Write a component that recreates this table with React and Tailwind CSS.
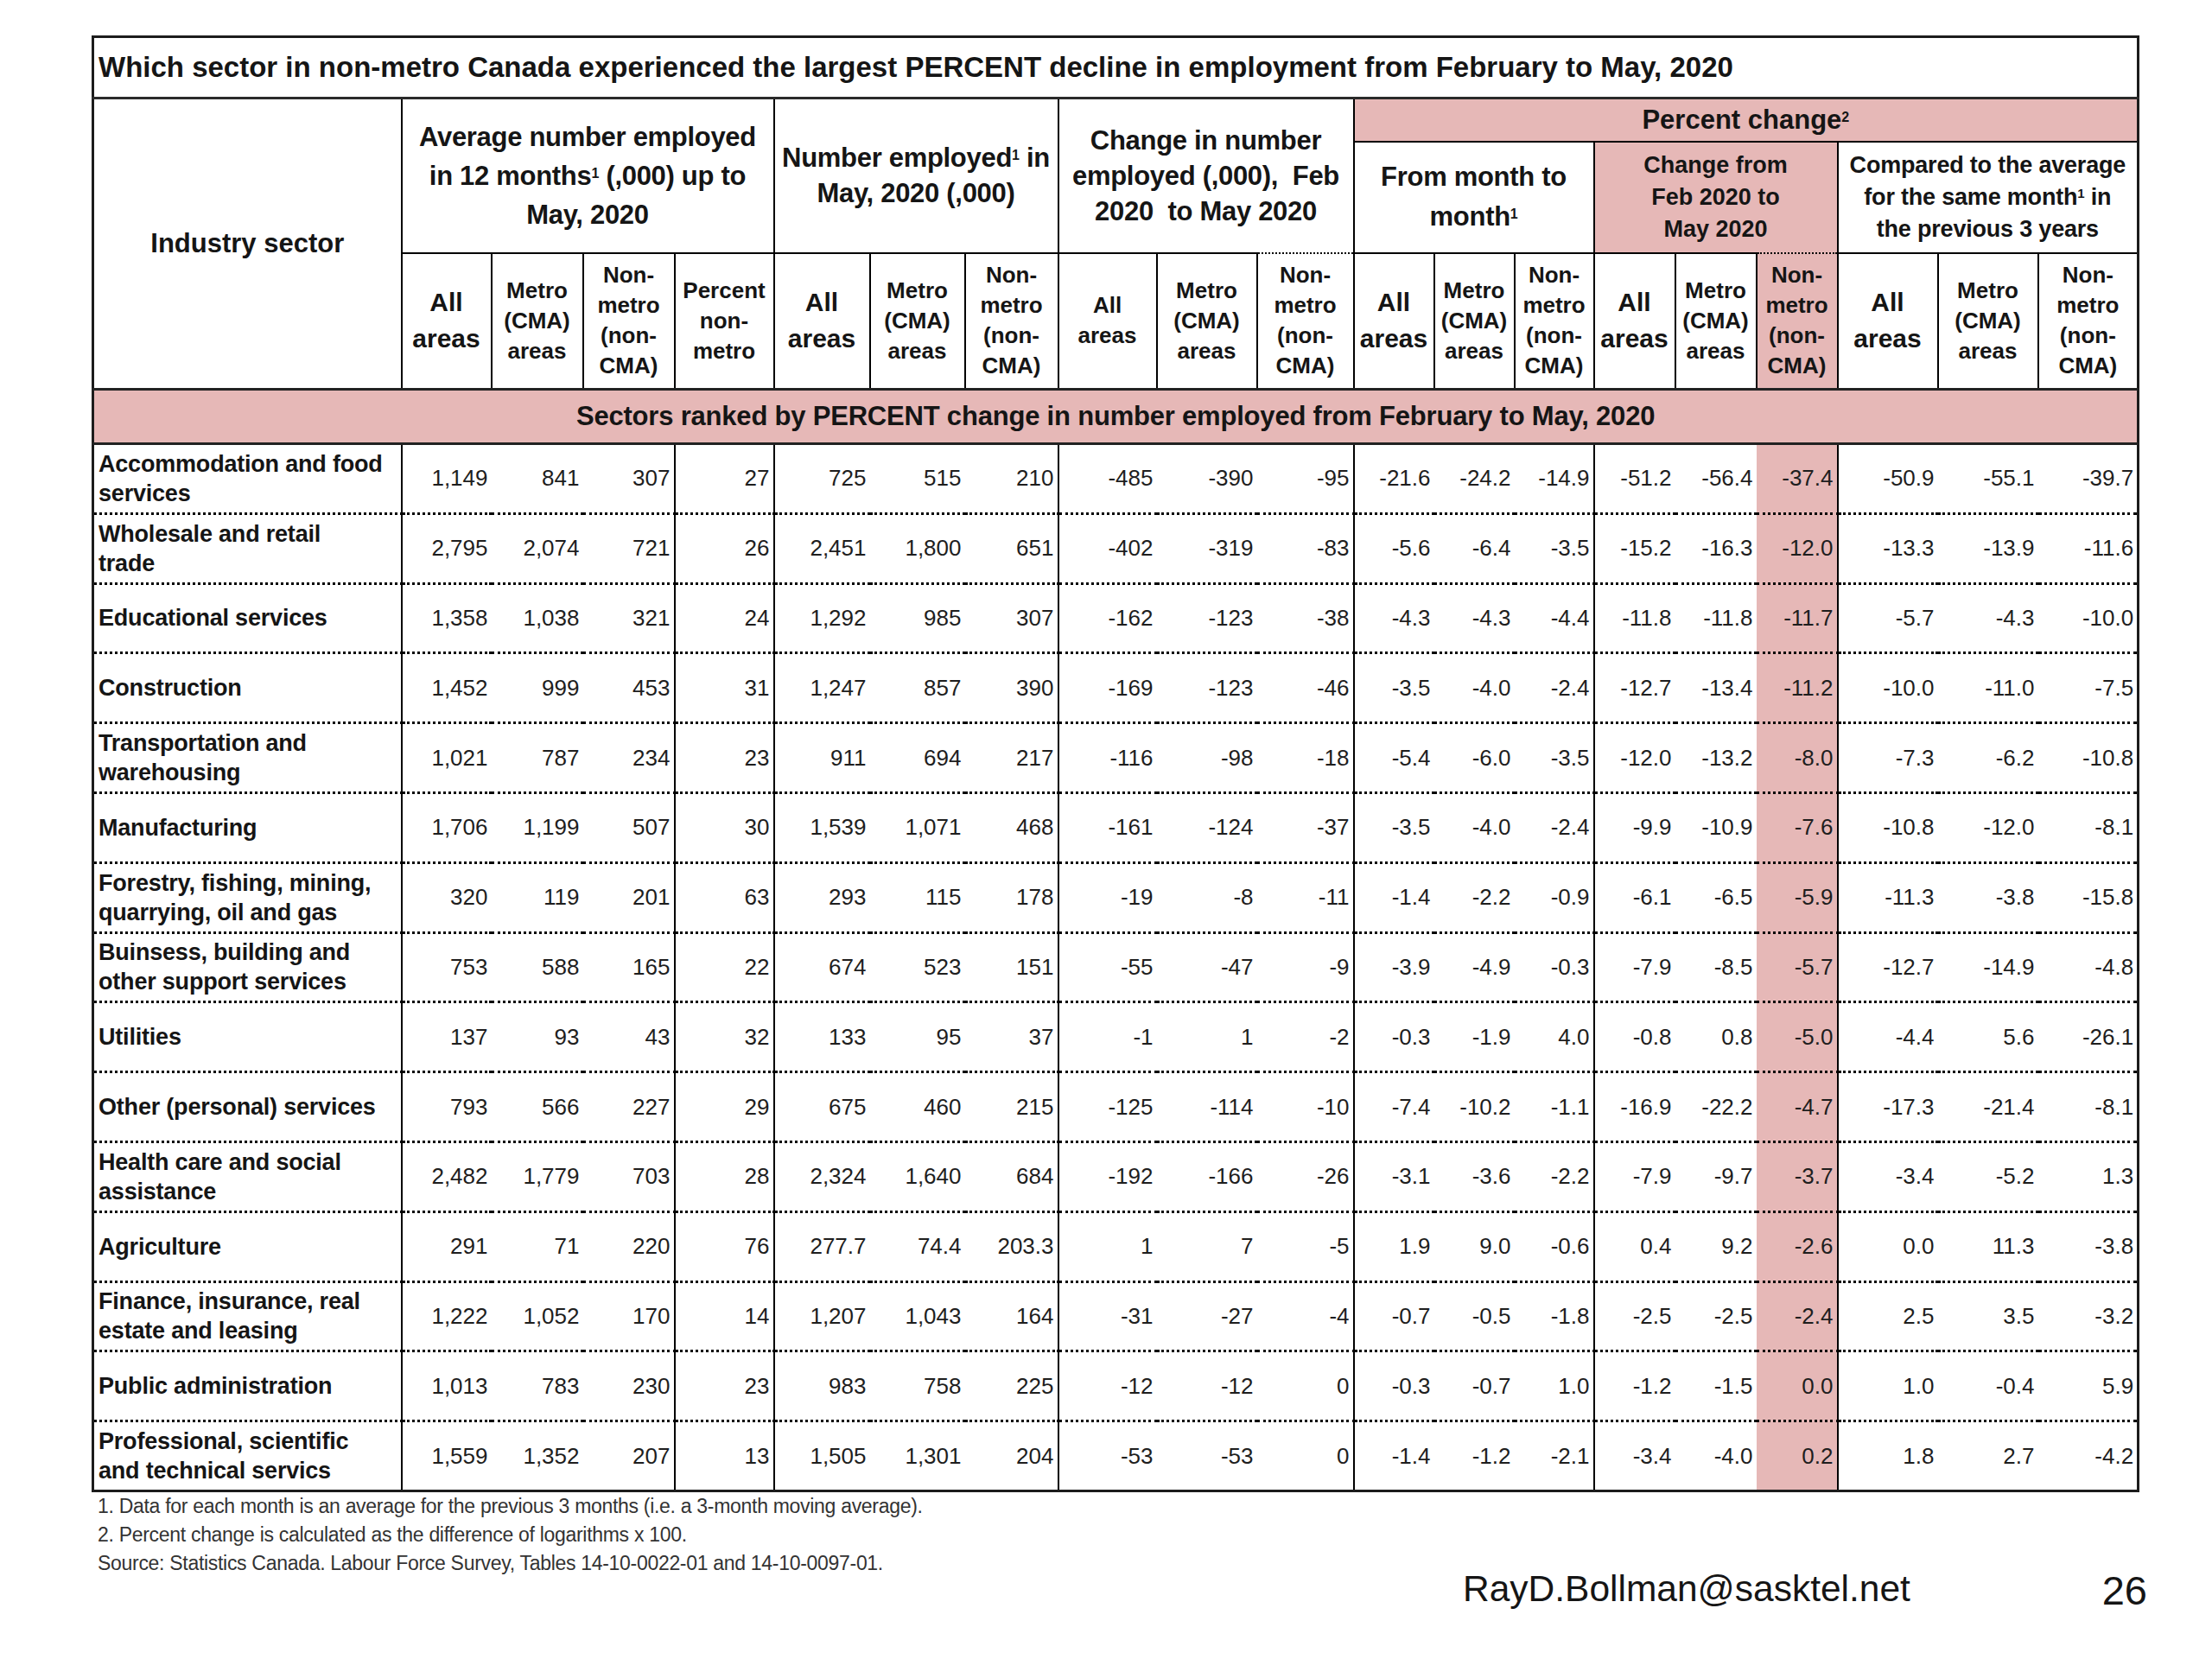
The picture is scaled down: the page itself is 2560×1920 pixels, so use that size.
const widths = [357, 104, 106, 106, 115, 111, 110, 108, 114, 116, 112, 93, 93, 92, 94, 94, 94, 116, 116, 116];

// solid rules in the body rows sit after these columns
const ruleAfter = new Set([0, 3, 4, 7, 10, 13, 16, 19]);
const pinkCol = 16;

const rows = [
  [["Accommodation and food", "services"], "1,149", "841", "307", "27", "725", "515", "210", "-485", "-390", "-95", "-21.6", "-24.2", "-14.9", "-51.2", "-56.4", "-37.4", "-50.9", "-55.1", "-39.7"],
  [["Wholesale and retail", "trade"], "2,795", "2,074", "721", "26", "2,451", "1,800", "651", "-402", "-319", "-83", "-5.6", "-6.4", "-3.5", "-15.2", "-16.3", "-12.0", "-13.3", "-13.9", "-11.6"],
  [["Educational services"], "1,358", "1,038", "321", "24", "1,292", "985", "307", "-162", "-123", "-38", "-4.3", "-4.3", "-4.4", "-11.8", "-11.8", "-11.7", "-5.7", "-4.3", "-10.0"],
  [["Construction"], "1,452", "999", "453", "31", "1,247", "857", "390", "-169", "-123", "-46", "-3.5", "-4.0", "-2.4", "-12.7", "-13.4", "-11.2", "-10.0", "-11.0", "-7.5"],
  [["Transportation and", "warehousing"], "1,021", "787", "234", "23", "911", "694", "217", "-116", "-98", "-18", "-5.4", "-6.0", "-3.5", "-12.0", "-13.2", "-8.0", "-7.3", "-6.2", "-10.8"],
  [["Manufacturing"], "1,706", "1,199", "507", "30", "1,539", "1,071", "468", "-161", "-124", "-37", "-3.5", "-4.0", "-2.4", "-9.9", "-10.9", "-7.6", "-10.8", "-12.0", "-8.1"],
  [["Forestry, fishing, mining,", "quarrying, oil and gas"], "320", "119", "201", "63", "293", "115", "178", "-19", "-8", "-11", "-1.4", "-2.2", "-0.9", "-6.1", "-6.5", "-5.9", "-11.3", "-3.8", "-15.8"],
  [["Buinsess, building and", "other support services"], "753", "588", "165", "22", "674", "523", "151", "-55", "-47", "-9", "-3.9", "-4.9", "-0.3", "-7.9", "-8.5", "-5.7", "-12.7", "-14.9", "-4.8"],
  [["Utilities"], "137", "93", "43", "32", "133", "95", "37", "-1", "1", "-2", "-0.3", "-1.9", "4.0", "-0.8", "0.8", "-5.0", "-4.4", "5.6", "-26.1"],
  [["Other (personal) services"], "793", "566", "227", "29", "675", "460", "215", "-125", "-114", "-10", "-7.4", "-10.2", "-1.1", "-16.9", "-22.2", "-4.7", "-17.3", "-21.4", "-8.1"],
  [["Health care and social", "assistance"], "2,482", "1,779", "703", "28", "2,324", "1,640", "684", "-192", "-166", "-26", "-3.1", "-3.6", "-2.2", "-7.9", "-9.7", "-3.7", "-3.4", "-5.2", "1.3"],
  [["Agriculture"], "291", "71", "220", "76", "277.7", "74.4", "203.3", "1", "7", "-5", "1.9", "9.0", "-0.6", "0.4", "9.2", "-2.6", "0.0", "11.3", "-3.8"],
  [["Finance, insurance, real", "estate and leasing"], "1,222", "1,052", "170", "14", "1,207", "1,043", "164", "-31", "-27", "-4", "-0.7", "-0.5", "-1.8", "-2.5", "-2.5", "-2.4", "2.5", "3.5", "-3.2"],
  [["Public administration"], "1,013", "783", "230", "23", "983", "758", "225", "-12", "-12", "0", "-0.3", "-0.7", "1.0", "-1.2", "-1.5", "0.0", "1.0", "-0.4", "5.9"],
  [["Professional, scientific", "and technical servics"], "1,559", "1,352", "207", "13", "1,505", "1,301", "204", "-53", "-53", "0", "-1.4", "-1.2", "-2.1", "-3.4", "-4.0", "0.2", "1.8", "2.7", "-4.2"],
];

const ALL = { lines: ["All", "areas"], big: true };
const METRO = { lines: ["Metro", "(CMA)", "areas"] };
const NON = { lines: ["Non-", "metro", "(non-", "CMA)"] };

const subHeads = [
  ALL, METRO, NON, { lines: ["Percent", "non-", "metro"] },
  ALL, METRO, NON,
  { lines: ["All", "areas"] }, METRO, { ...NON, dotted: true },
  ALL, METRO, NON,
  ALL, METRO, { ...NON, dotted: true, pink: true },
  ALL, METRO, NON,
];

const Lines = ({ lines }) =>
  lines.map((l, i) => (
    <span key={i} className="block">
      {l}
    </span>
  ));

export default function App() {
  return (
    <div className="min-h-screen bg-white pl-[106px] pt-[41px] font-['Liberation_Sans',Arial,sans-serif] text-[#151515]">
      <table className="w-[2368px] table-fixed border-collapse border-[3px] border-[#1c1c1c]">
        <colgroup>
          {widths.map((w, i) => (
            <col key={i} style={{ width: w }} />
          ))}
        </colgroup>
        <thead>
          <tr className="h-[71px]">
            <th colSpan={20} className="border-b-[3px] border-[#2a2a2a] pl-[5px] text-left text-[33px] font-bold">
              Which sector in non-metro Canada experienced the largest PERCENT decline in employment from February to May, 2020
            </th>
          </tr>
          <tr className="h-[50px]">
            <th rowSpan={3} className="border-r-2 border-black text-[31px] font-bold">
              Industry sector
            </th>
            <th colSpan={4} rowSpan={2} className="border-r-2 border-black text-[31px] font-bold leading-[45px] tracking-[-0.3px]">
              Average number employed
              <br />
              in 12 months<sup className="text-[16px]">1</sup> (,000) up to
              <br />
              May, 2020
            </th>
            <th colSpan={3} rowSpan={2} className="border-r-2 border-black text-[31px] font-bold leading-[41px] tracking-[-0.3px]">
              Number employed<sup className="text-[16px]">1</sup> in
              <br />
              May, 2020 (,000)
            </th>
            <th colSpan={3} rowSpan={2} className="border-r-2 border-black text-[31px] font-bold leading-[41px] tracking-[-0.3px]">
              Change in number
              <br />
              employed (,000), &nbsp;Feb
              <br />
              2020 &nbsp;to May 2020
            </th>
            <th colSpan={9} className="border-b-2 border-black bg-[#e6b8b7] text-[31px] font-bold">
              Percent change<sup className="text-[16px]">2</sup>
            </th>
          </tr>
          <tr className="h-[129px]">
            <th colSpan={3} className="border-r-2 border-black text-[31px] font-bold leading-[46px] tracking-[-0.3px]">
              From month to
              <br />
              month<sup className="text-[16px]">1</sup>
            </th>
            <th colSpan={3} className="border-r-2 border-black bg-[#e6b8b7] text-[27px] font-bold leading-[37px]">
              Change from
              <br />
              Feb 2020 to
              <br />
              May 2020
            </th>
            <th colSpan={3} className="text-[27px] font-bold leading-[37px] tracking-[-0.2px]">
              Compared to the average
              <br />
              for the same month<sup className="text-[15px]">1</sup> in
              <br />
              the previous 3 years
            </th>
          </tr>
          <tr className="h-[158px]">
            {subHeads.map((h, i) => (
              <th
                key={i}
                className={`border-r-2 border-t-2 border-black font-bold ${
                  h.dotted ? "[border-top-style:dotted]" : ""
                } ${h.pink ? "bg-[#e6b8b7]" : ""} ${
                  h.big ? "text-[30px] leading-[42px]" : "text-[26px] leading-[35px]"
                }`}
              >
                <Lines lines={h.lines} />
              </th>
            ))}
          </tr>
          <tr className="h-[63px]">
            <th colSpan={20} className="border-y-[3px] border-[#222] bg-[#e6b8b7] text-[31px] font-bold tracking-[-0.2px]">
              Sectors ranked by PERCENT change in number employed from February to May, 2020
            </th>
          </tr>
        </thead>
        <tbody>
          {rows.map((r, ri) => {
            const last = ri === rows.length - 1;
            return (
              <tr key={ri} className="h-[80.8px]">
                {r.map((v, ci) => (
                  <td
                    key={ci}
                    className={`${
                      last ? "" : "border-b-[3px] border-b-black [border-bottom-style:dotted]"
                    } ${ruleAfter.has(ci) ? "border-r-2 border-r-black" : ""} ${
                      ci === pinkCol ? "bg-[#e6b8b7]" : ""
                    } ${
                      ci === 0
                        ? "pl-[5px] text-left text-[27px] font-bold leading-[34px] tracking-[-0.2px]"
                        : "pr-[4px] text-right text-[26px] text-[#1e1e1e]"
                    }`}
                  >
                    {ci === 0 ? <Lines lines={v} /> : v}
                  </td>
                ))}
              </tr>
            );
          })}
        </tbody>
      </table>

      <div className="flex w-[2379px] items-start">
        <div className="pl-[7px] text-[23px] leading-[33px] tracking-[-0.3px] text-[#333]">
          <p>1. Data for each month is an average for the previous 3 months (i.e. a 3-month moving average).</p>
          <p>2. Percent change is calculated as the difference of logarithms x 100.</p>
          <p>Source: Statistics Canada. Labour Force Survey, Tables 14-10-0022-01 and 14-10-0097-01.</p>
        </div>
        <div className="ml-auto flex w-[792px] items-start justify-between pt-[88px]">
          <span className="text-[42.5px] leading-[48px]">RayD.Bollman@sasktel.net</span>
          <span className="text-[47px] leading-[52px]">26</span>
        </div>
      </div>
    </div>
  );
}
